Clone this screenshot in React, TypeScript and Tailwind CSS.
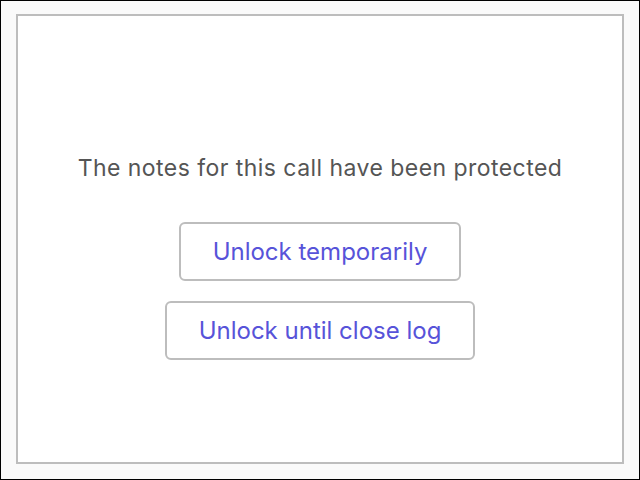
const App = () => {
  return (
    <div
      className="w-[640px] h-[480px] border border-black bg-[#fafafa] pt-[13px] px-[15px] pb-[15px]"
      style={{ fontFamily: "Inter, 'Noto Sans', sans-serif" }}
    >
      <div className="h-full border-2 border-[#bdbdbd] bg-white flex flex-col items-center pt-[138px]">
        {/* MESSAGE */}
        <p className="text-[23px] leading-[28px] tracking-[0.45px] text-[#555555]">
          The notes for this call have been protected
        </p>
        {/* ACTIONS */}
        <div className="mt-[40px] flex flex-col items-center gap-[20px]">
          <button className="h-[59px] px-[32px] border-2 border-[#bdbdbd] rounded-[6px] bg-white text-[24px] text-[#5753d9]">
            Unlock temporarily
          </button>
          <button className="h-[59px] px-[32px] border-2 border-[#bdbdbd] rounded-[6px] bg-white text-[24px] text-[#5753d9]">
            Unlock until close log
          </button>
        </div>
      </div>
    </div>
  );
};

export default App;
